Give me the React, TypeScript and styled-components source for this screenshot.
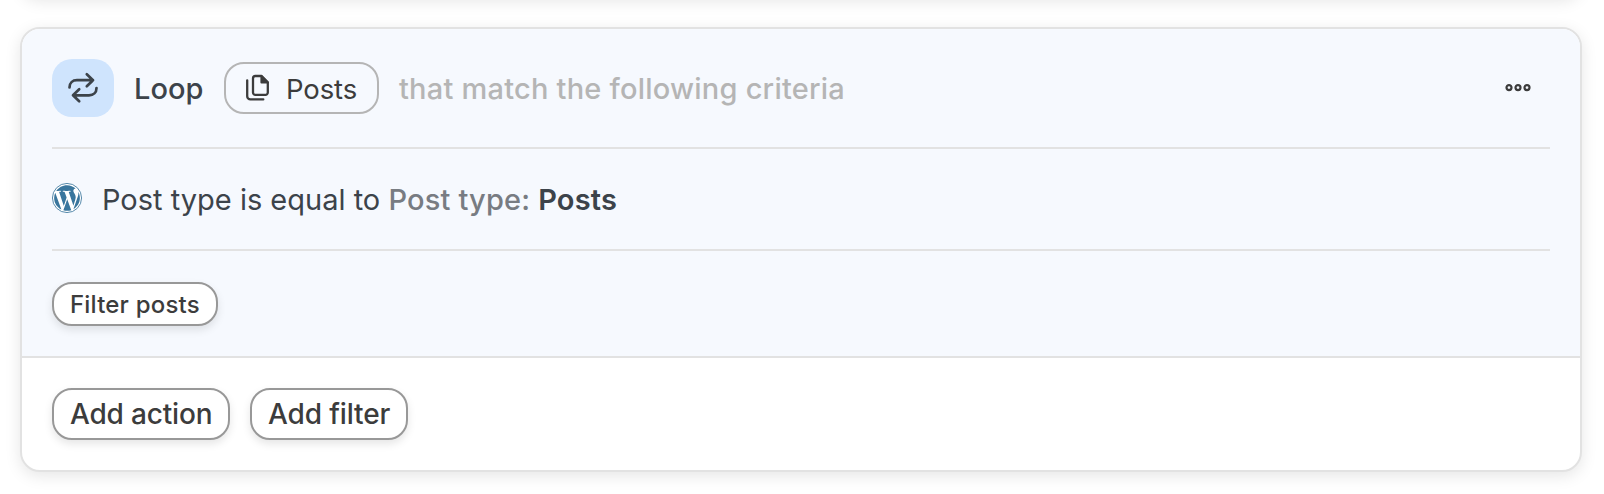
import React from "react";
import styled, { createGlobalStyle } from "styled-components";

const GlobalStyle = createGlobalStyle`
  *, *::before, *::after { box-sizing: border-box; }
  body {
    margin: 0;
    background: #fff;
    font-family: Inter, "Liberation Sans", sans-serif;
    color: #3c434a;
    overflow: hidden;
  }
`;

const Page = styled.main`
  display: flex;
  flex-direction: column;
  gap: 30px;
  width: 1604px;
  height: 494px;
  padding: 0 22px 0 20px;
  overflow: hidden;
`;

const Card = styled.section`
  flex: none;
  border: 2px solid #e2e2e2;
  border-radius: 20px;
  background: #fff;
  box-shadow: 0 4px 16px rgba(0, 0, 0, 0.1);
  overflow: hidden;
`;

const PreviousCard = styled(Card)`
  height: 60px;
  margin-top: -63px;
`;

const Scope = styled.div`
  padding: 0 30px;
  background: #f6f9fe;
  border-bottom: 2px solid #e2e2e2;
`;

const Header = styled.header`
  display: flex;
  align-items: center;
  height: 120px;
  border-bottom: 2px solid #e2e2e2;
`;

const LoopBadge = styled.span`
  display: flex;
  align-items: center;
  justify-content: center;
  width: 62px;
  height: 58px;
  border-radius: 20px;
  background: #cfe4fd;
`;

const Label = styled.span<{ $size?: number; $weight?: number; $spacing?: number; $color?: string }>`
  padding-top: 2px;
  font-size: ${(p) => p.$size ?? 29}px;
  font-weight: ${(p) => p.$weight ?? 400};
  letter-spacing: ${(p) => p.$spacing ?? 0}px;
  color: ${(p) => p.$color ?? "#3c434a"};
  line-height: 1.2;
  white-space: pre;
`;

const Title = styled(Label)`
  width: 90px;
  margin-left: 20px;
`;

const EntityPill = styled.span`
  display: flex;
  align-items: center;
  gap: 14px;
  width: 155px;
  height: 52px;
  padding-left: 18px;
  border: 2px solid #b5b5b5;
  border-radius: 20px;
`;

const EntityName = styled(Label)`
  padding-top: 3px;
`;

const Hint = styled(Label)`
  margin-left: 20px;
`;

const MoreButton = styled.button`
  display: flex;
  margin-left: auto;
  margin-right: 19px;
  padding: 0;
  border: 0;
  background: none;
`;

const Criteria = styled.div`
  display: flex;
  align-items: center;
  height: 102px;
  border-bottom: 2px solid #e2e2e2;
`;

const CriteriaIcon = styled.span`
  display: flex;
  width: 50px;
  padding-bottom: 3px;
`;

const ButtonRow = styled.div<{ $inset?: boolean }>`
  display: flex;
  gap: 20px;
  padding: ${(p) => (p.$inset ? "31px 0 30px" : "30px")};
`;

const Button = styled.button<{ $width: number; $small?: boolean }>`
  display: flex;
  align-items: center;
  width: ${(p) => p.$width}px;
  height: ${(p) => (p.$small ? 44 : 52)}px;
  padding: 0 0 0 16px;
  border: 2px solid #989898;
  border-radius: 20px;
  background: #fff;
  font-family: inherit;
  box-shadow: 0 4px 8px rgba(0, 0, 0, 0.1);
`;

const LoopIcon = () => (
  <svg width="32" height="32" viewBox="0 0 32 32" fill="none" stroke="#3c434a" strokeWidth="2.7" strokeLinecap="round" strokeLinejoin="round">
    <path d="M2.5 15.5c0-4.5 3-7.3 7.5-7.3h16M19.8 2.2l6.2 6-6.2 6" />
    <path d="M29.5 16c0 4.5-3 7.3-7.5 7.3H6M12.2 17.3l-6.2 6 6.2 6" />
  </svg>
);

const PagesIcon = () => (
  <svg width="28" height="30" viewBox="0 0 28 30" fill="none" stroke="#3c3c3c" strokeWidth="2.3" strokeLinecap="round" strokeLinejoin="round">
    <path d="M11.4 3H17.6L23.8 9.2V19.5a2.4 2.4 0 0 1-2.4 2.4H11.4A2.4 2.4 0 0 1 9 19.5V5.4A2.4 2.4 0 0 1 11.4 3Z" />
    <path d="M17.4 3V9.4H23.8Z" fill="#3c3c3c" strokeWidth="2" />
    <path d="M3.2 7.3V23.2a3.2 3.2 0 0 0 3.2 3.2H19.3" />
  </svg>
);

const WordPressIcon = () => (
  <svg width="30" height="30" viewBox="0 0 122.52 122.52" fill="#3a769d">
    <circle cx="61.26" cy="61.26" r="59.5" fill="#fff" stroke="#3a769d" strokeWidth="3.5" />
    <path d="m8.708 61.26c0 20.802 12.089 38.779 29.619 47.298l-25.069-68.686c-2.916 6.536-4.55 13.769-4.55 21.388z" />
    <path d="m96.74 58.608c0-6.495-2.333-10.993-4.334-14.494-2.664-4.329-5.161-7.995-5.161-12.324 0-4.831 3.664-9.328 8.825-9.328.233 0 .454.029.681.042-9.35-8.566-21.807-13.796-35.489-13.796-18.36 0-34.513 9.42-43.91 23.688 1.233.037 2.395.063 3.382.063 5.497 0 14.006-.667 14.006-.667 2.833-.167 3.167 3.994.337 4.329 0 0-2.847.335-6.015.501l19.138 56.925 11.501-34.493-8.188-22.434c-2.83-.166-5.511-.501-5.511-.501-2.832-.166-2.5-4.496.332-4.329 0 0 8.679.667 13.843.667 5.496 0 14.006-.667 14.006-.667 2.835-.167 3.168 3.994.337 4.329 0 0-2.853.335-6.015.501l18.992 56.494 5.242-17.517c2.272-7.269 4.001-12.49 4.001-16.989z" />
    <path d="m62.184 65.857-15.768 45.819c4.708 1.384 9.687 2.141 14.846 2.141 6.12 0 11.989-1.058 17.452-2.979-.141-.225-.269-.464-.374-.724z" />
    <path d="m107.376 36.046c.226 1.674.354 3.471.354 5.404 0 5.333-.996 11.328-3.996 18.824l-16.053 46.413c15.624-9.111 26.133-26.038 26.133-45.426.001-9.137-2.333-17.729-6.438-25.215z" />
  </svg>
);

const DotsIcon = () => (
  <svg width="26" height="8" viewBox="0 0 26 8" fill="none" stroke="#3c3c3c" strokeWidth="2.2">
    <circle cx="4" cy="3.6" r="2.5" />
    <circle cx="13" cy="3.6" r="2.5" />
    <circle cx="22" cy="3.6" r="2.5" />
  </svg>
);

export default function App() {
  return (
    <>
      <GlobalStyle />
      <Page>
        <PreviousCard />
        <Card>
          <Scope>
            <Header>
              <LoopBadge><LoopIcon /></LoopBadge>
              <Title $weight={500}>Loop</Title>
              <EntityPill>
                <PagesIcon />
                <EntityName $size={27.5} $spacing={-0.1} $color="#3c3c3c">Posts</EntityName>
              </EntityPill>
              <Hint $size={29} $weight={500} $spacing={0.22} $color="#b5b5b5">that match the following criteria</Hint>
              <MoreButton aria-label="More options"><DotsIcon /></MoreButton>
            </Header>
            <Criteria>
              <CriteriaIcon><WordPressIcon /></CriteriaIcon>
              <Label>Post type is equal to </Label>
              <Label $weight={500} $spacing={0.18} $color="#787c82">Post type: </Label>
              <Label $weight={600} $spacing={0.2}>Posts</Label>
            </Criteria>
            <ButtonRow $inset>
              <Button $width={166} $small>
                <Label $size={24} $weight={500} $spacing={0.2} $color="#3c3c3c">Filter posts</Label>
              </Button>
            </ButtonRow>
          </Scope>
          <ButtonRow>
            <Button $width={178}>
              <Label $size={28} $weight={500} $spacing={-0.18} $color="#3c3c3c">Add action</Label>
            </Button>
            <Button $width={158}>
              <Label $size={28} $weight={500} $spacing={-0.12} $color="#3c3c3c">Add filter</Label>
            </Button>
          </ButtonRow>
        </Card>
      </Page>
    </>
  );
}
